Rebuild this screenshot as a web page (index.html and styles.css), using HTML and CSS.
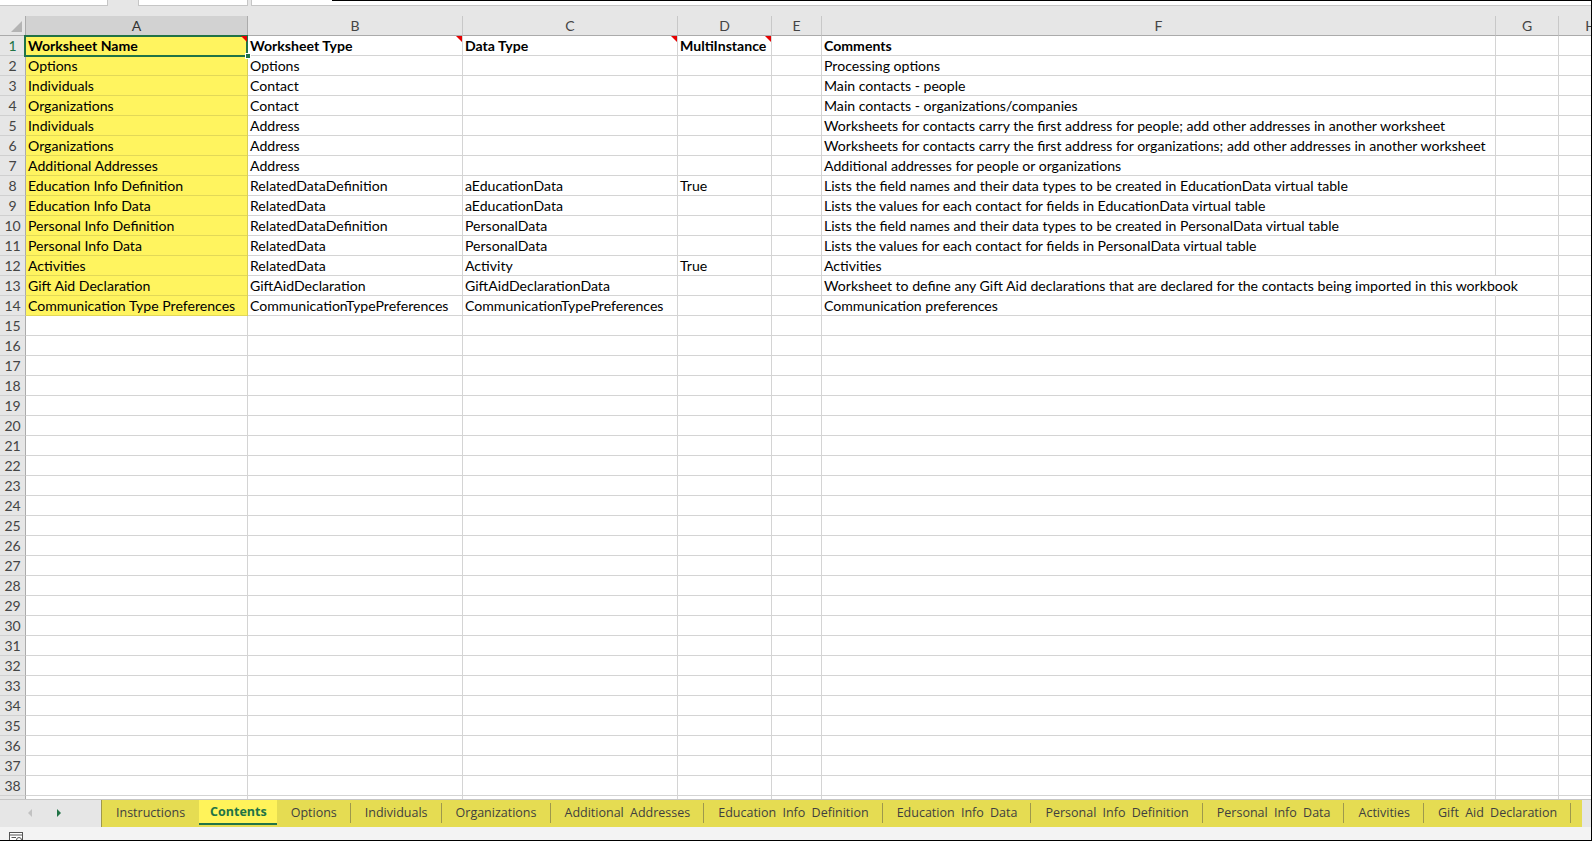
FILE: index.html
```html
<!DOCTYPE html>
<html lang="en">
<head>
<meta charset="utf-8">
<title>Contents</title>
<link rel="stylesheet" href="styles.css">
</head>
<body>
<div class="app">
  <div class="topstrip">
    <div class="fb fb1"></div>
    <div class="fb fb2"></div>
    <div class="fb fb3"></div>
  </div>

  <div class="sheet">
    <div class="row colhead">
      <div class="corner"><span class="tri"></span></div>
      <div class="ch sel">A</div><div class="ch">B</div><div class="ch">C</div><div class="ch">D</div><div class="ch">E</div><div class="ch">F</div><div class="ch">G</div><div class="ch">H</div>
    </div>

    <div class="row">
      <div class="rh selrow">1</div>
      <div class="c y b note active">Worksheet Name<span class="selbox"></span><span class="handle"></span></div>
      <div class="c b note">Worksheet Type</div>
      <div class="c b note">Data Type</div>
      <div class="c b note">MultiInstance</div>
      <div class="c"></div>
      <div class="c b">Comments</div>
      <div class="c"></div><div class="c"></div>
    </div>
    <div class="row">
      <div class="rh">2</div>
      <div class="c y">Options</div><div class="c">Options</div><div class="c"></div><div class="c"></div><div class="c"></div>
      <div class="c">Processing options</div><div class="c"></div><div class="c"></div>
    </div>
    <div class="row">
      <div class="rh">3</div>
      <div class="c y">Individuals</div><div class="c">Contact</div><div class="c"></div><div class="c"></div><div class="c"></div>
      <div class="c">Main contacts - people</div><div class="c"></div><div class="c"></div>
    </div>
    <div class="row">
      <div class="rh">4</div>
      <div class="c y">Organizations</div><div class="c">Contact</div><div class="c"></div><div class="c"></div><div class="c"></div>
      <div class="c">Main contacts - organizations/companies</div><div class="c"></div><div class="c"></div>
    </div>
    <div class="row">
      <div class="rh">5</div>
      <div class="c y">Individuals</div><div class="c">Address</div><div class="c"></div><div class="c"></div><div class="c"></div>
      <div class="c">Worksheets for contacts carry the first address for people; add other addresses in another worksheet</div><div class="c"></div><div class="c"></div>
    </div>
    <div class="row">
      <div class="rh">6</div>
      <div class="c y">Organizations</div><div class="c">Address</div><div class="c"></div><div class="c"></div><div class="c"></div>
      <div class="c">Worksheets for contacts carry the first address for organizations; add other addresses in another worksheet</div><div class="c"></div><div class="c"></div>
    </div>
    <div class="row">
      <div class="rh">7</div>
      <div class="c y">Additional Addresses</div><div class="c">Address</div><div class="c"></div><div class="c"></div><div class="c"></div>
      <div class="c">Additional addresses for people or organizations</div><div class="c"></div><div class="c"></div>
    </div>
    <div class="row">
      <div class="rh">8</div>
      <div class="c y">Education Info Definition</div><div class="c">RelatedDataDefinition</div><div class="c">aEducationData</div><div class="c">True</div><div class="c"></div>
      <div class="c">Lists the field names and their data types to be created in EducationData virtual table</div><div class="c"></div><div class="c"></div>
    </div>
    <div class="row">
      <div class="rh">9</div>
      <div class="c y">Education Info Data</div><div class="c">RelatedData</div><div class="c">aEducationData</div><div class="c"></div><div class="c"></div>
      <div class="c">Lists the values for each contact for fields in EducationData virtual table</div><div class="c"></div><div class="c"></div>
    </div>
    <div class="row">
      <div class="rh">10</div>
      <div class="c y">Personal Info Definition</div><div class="c">RelatedDataDefinition</div><div class="c">PersonalData</div><div class="c"></div><div class="c"></div>
      <div class="c">Lists the field names and their data types to be created in PersonalData virtual table</div><div class="c"></div><div class="c"></div>
    </div>
    <div class="row">
      <div class="rh">11</div>
      <div class="c y">Personal Info Data</div><div class="c">RelatedData</div><div class="c">PersonalData</div><div class="c"></div><div class="c"></div>
      <div class="c">Lists the values for each contact for fields in PersonalData virtual table</div><div class="c"></div><div class="c"></div>
    </div>
    <div class="row">
      <div class="rh">12</div>
      <div class="c y">Activities</div><div class="c">RelatedData</div><div class="c">Activity</div><div class="c">True</div><div class="c"></div>
      <div class="c">Activities</div><div class="c"></div><div class="c"></div>
    </div>
    <div class="row">
      <div class="rh">13</div>
      <div class="c y">Gift Aid Declaration</div><div class="c">GiftAidDeclaration</div><div class="c">GiftAidDeclarationData</div><div class="c"></div><div class="c"></div>
      <div class="c spill">Worksheet to define any Gift Aid declarations that are declared for the contacts being imported in this workbook</div><div class="c"></div><div class="c"></div>
    </div>
    <div class="row">
      <div class="rh">14</div>
      <div class="c y last">Communication Type Preferences</div><div class="c">CommunicationTypePreferences</div><div class="c">CommunicationTypePreferences</div><div class="c"></div><div class="c"></div>
      <div class="c">Communication preferences</div><div class="c"></div><div class="c"></div>
    </div>

    <div class="row"><div class="rh">15</div><div class="c"></div><div class="c"></div><div class="c"></div><div class="c"></div><div class="c"></div><div class="c"></div><div class="c"></div><div class="c"></div></div>
    <div class="row"><div class="rh">16</div><div class="c"></div><div class="c"></div><div class="c"></div><div class="c"></div><div class="c"></div><div class="c"></div><div class="c"></div><div class="c"></div></div>
    <div class="row"><div class="rh">17</div><div class="c"></div><div class="c"></div><div class="c"></div><div class="c"></div><div class="c"></div><div class="c"></div><div class="c"></div><div class="c"></div></div>
    <div class="row"><div class="rh">18</div><div class="c"></div><div class="c"></div><div class="c"></div><div class="c"></div><div class="c"></div><div class="c"></div><div class="c"></div><div class="c"></div></div>
    <div class="row"><div class="rh">19</div><div class="c"></div><div class="c"></div><div class="c"></div><div class="c"></div><div class="c"></div><div class="c"></div><div class="c"></div><div class="c"></div></div>
    <div class="row"><div class="rh">20</div><div class="c"></div><div class="c"></div><div class="c"></div><div class="c"></div><div class="c"></div><div class="c"></div><div class="c"></div><div class="c"></div></div>
    <div class="row"><div class="rh">21</div><div class="c"></div><div class="c"></div><div class="c"></div><div class="c"></div><div class="c"></div><div class="c"></div><div class="c"></div><div class="c"></div></div>
    <div class="row"><div class="rh">22</div><div class="c"></div><div class="c"></div><div class="c"></div><div class="c"></div><div class="c"></div><div class="c"></div><div class="c"></div><div class="c"></div></div>
    <div class="row"><div class="rh">23</div><div class="c"></div><div class="c"></div><div class="c"></div><div class="c"></div><div class="c"></div><div class="c"></div><div class="c"></div><div class="c"></div></div>
    <div class="row"><div class="rh">24</div><div class="c"></div><div class="c"></div><div class="c"></div><div class="c"></div><div class="c"></div><div class="c"></div><div class="c"></div><div class="c"></div></div>
    <div class="row"><div class="rh">25</div><div class="c"></div><div class="c"></div><div class="c"></div><div class="c"></div><div class="c"></div><div class="c"></div><div class="c"></div><div class="c"></div></div>
    <div class="row"><div class="rh">26</div><div class="c"></div><div class="c"></div><div class="c"></div><div class="c"></div><div class="c"></div><div class="c"></div><div class="c"></div><div class="c"></div></div>
    <div class="row"><div class="rh">27</div><div class="c"></div><div class="c"></div><div class="c"></div><div class="c"></div><div class="c"></div><div class="c"></div><div class="c"></div><div class="c"></div></div>
    <div class="row"><div class="rh">28</div><div class="c"></div><div class="c"></div><div class="c"></div><div class="c"></div><div class="c"></div><div class="c"></div><div class="c"></div><div class="c"></div></div>
    <div class="row"><div class="rh">29</div><div class="c"></div><div class="c"></div><div class="c"></div><div class="c"></div><div class="c"></div><div class="c"></div><div class="c"></div><div class="c"></div></div>
    <div class="row"><div class="rh">30</div><div class="c"></div><div class="c"></div><div class="c"></div><div class="c"></div><div class="c"></div><div class="c"></div><div class="c"></div><div class="c"></div></div>
    <div class="row"><div class="rh">31</div><div class="c"></div><div class="c"></div><div class="c"></div><div class="c"></div><div class="c"></div><div class="c"></div><div class="c"></div><div class="c"></div></div>
    <div class="row"><div class="rh">32</div><div class="c"></div><div class="c"></div><div class="c"></div><div class="c"></div><div class="c"></div><div class="c"></div><div class="c"></div><div class="c"></div></div>
    <div class="row"><div class="rh">33</div><div class="c"></div><div class="c"></div><div class="c"></div><div class="c"></div><div class="c"></div><div class="c"></div><div class="c"></div><div class="c"></div></div>
    <div class="row"><div class="rh">34</div><div class="c"></div><div class="c"></div><div class="c"></div><div class="c"></div><div class="c"></div><div class="c"></div><div class="c"></div><div class="c"></div></div>
    <div class="row"><div class="rh">35</div><div class="c"></div><div class="c"></div><div class="c"></div><div class="c"></div><div class="c"></div><div class="c"></div><div class="c"></div><div class="c"></div></div>
    <div class="row"><div class="rh">36</div><div class="c"></div><div class="c"></div><div class="c"></div><div class="c"></div><div class="c"></div><div class="c"></div><div class="c"></div><div class="c"></div></div>
    <div class="row"><div class="rh">37</div><div class="c"></div><div class="c"></div><div class="c"></div><div class="c"></div><div class="c"></div><div class="c"></div><div class="c"></div><div class="c"></div></div>
    <div class="row"><div class="rh">38</div><div class="c"></div><div class="c"></div><div class="c"></div><div class="c"></div><div class="c"></div><div class="c"></div><div class="c"></div><div class="c"></div></div>
    <div class="row partial"><div class="rh"></div><div class="c"></div><div class="c"></div><div class="c"></div><div class="c"></div><div class="c"></div><div class="c"></div><div class="c"></div><div class="c"></div></div>
  </div>

  <div class="tabbar">
    <div class="nav">
      <span class="arrow left"></span>
      <span class="arrow right"></span>
    </div>
    <div class="tabs">
      <div class="tab">Instructions</div>
      <div class="tab active">Contents</div>
      <div class="tab">Options</div>
      <div class="tab">Individuals</div>
      <div class="tab">Organizations</div>
      <div class="tab">Additional Addresses</div>
      <div class="tab">Education Info Definition</div>
      <div class="tab">Education Info Data</div>
      <div class="tab">Personal Info Definition</div>
      <div class="tab">Personal Info Data</div>
      <div class="tab">Activities</div>
      <div class="tab">Gift Aid Declaration</div>
      <div class="tab">Communication Type Preferences</div>
    </div>
    <div class="tabrest"></div>
  </div>

  <div class="status">
    <svg class="macro" width="14" height="10" viewBox="0 0 14 10">
      <rect x="0.5" y="0.5" width="13" height="10" fill="#fff" stroke="#555"/>
      <line x1="0.5" y1="3" x2="13.5" y2="3" stroke="#555"/>
      <line x1="2.5" y1="5.5" x2="7" y2="5.5" stroke="#555"/>
      <circle cx="10" cy="8" r="2.5" fill="#fff" stroke="#555"/>
    </svg>
  </div>
</div>
</body>
</html>
```

FILE: styles.css
```css
* { box-sizing: border-box; }

html, body {
  margin: 0;
  padding: 0;
  background: #ffffff;
}

body {
  width: 1592px;
  height: 841px;
  overflow: hidden;
  font-family: "Lato", "Liberation Sans", sans-serif;
  color: #000;
}

.app {
  width: 1592px;
  height: 841px;
  display: flex;
  flex-direction: column;
  border-right: 1px solid #000;
  border-bottom: 1px solid #000;
  overflow: hidden;
}

/* remnants of the formula bar */
.topstrip {
  height: 16px;
  flex: none;
  display: flex;
  align-items: flex-start;
  background: #e6e6e6;
}

.fb {
  height: 6px;
  background: #fff;
  border-bottom: 1px solid #c6c6c6;
  border-right: 1px solid #c6c6c6;
}

.fb1 { width: 108px; margin-right: 30px; }
.fb2 { width: 110px; margin-right: 3px; border-left: 1px solid #c6c6c6; }
.fb3 {
  flex: 1;
  border-left: 1px solid #c6c6c6;
  border-right: none;
  background: linear-gradient(to right, transparent 80px, #000 80px) top left / 100% 1px no-repeat, #fff;
}

/* grid */
.sheet {
  flex: 1 1 auto;
  overflow: hidden;
  min-height: 0;
}

.row {
  display: grid;
  grid-template-columns: 26px 222px 215px 215px 94px 50px 674px 63px 64px;
  height: 20px;
}

.colhead {
  background: #e6e6e6;
  height: 20px;
}

.corner {
  position: relative;
  border-right: 1px solid #ababab;
  border-bottom: 1px solid #ababab;
}

.corner .tri {
  position: absolute;
  right: 3px;
  bottom: 3px;
  width: 0;
  height: 0;
  border-left: 11px solid transparent;
  border-bottom: 11px solid #b4b4b4;
}

.ch {
  font-size: 14px;
  line-height: 19px;
  text-align: center;
  color: #444;
  border-right: 1px solid #c8c8c8;
  border-bottom: 1px solid #ababab;
}

.ch.sel {
  background: #d2d2d2;
  color: #333;
  border-right-color: #ababab;
}

.rh {
  background: #e6e6e6;
  font-size: 14px;
  line-height: 19px;
  text-align: center;
  color: #444;
  border-right: 1px solid #ababab;
  border-bottom: 1px solid #d0d0d0;
}

.rh.selrow {
  color: #217346;
}

.c {
  position: relative;
  font-size: 14.1px;
  line-height: 19px;
  padding: 0 2px;
  white-space: nowrap;
  overflow: hidden;
  border-right: 1px solid #d4d4d4;
  border-bottom: 1px solid #d4d4d4;
}

.c.b { font-weight: 700; }

.c.y {
  background: #fff45f;
  border-right-color: #d9cf55;
  border-bottom-color: #e2d858;
}

.c.spill {
  overflow: visible;
  border-right-color: transparent;
  z-index: 1;
}

.c.note::after {
  content: "";
  position: absolute;
  top: 0;
  right: 0;
  width: 0;
  height: 0;
  border-left: 6px solid transparent;
  border-top: 6px solid #e60000;
}

.c.active { overflow: visible; z-index: 2; }

.selbox {
  position: absolute;
  left: -2px;
  top: -1px;
  right: -1px;
  bottom: -2px;
  border: 2px solid #217346;
  pointer-events: none;
}

.handle {
  position: absolute;
  right: -4px;
  bottom: -4px;
  width: 6px;
  height: 6px;
  background: #217346;
  border: 1px solid #fff;
}

/* sheet tabs */
.tabbar {
  height: 28px;
  flex: none;
  display: flex;
  background: #e6e6e6;
  border-top: 1px solid #c6c6c6;
}

.nav {
  width: 101px;
  flex: none;
  position: relative;
}

.arrow {
  position: absolute;
  top: 9px;
  width: 0;
  height: 0;
  border-top: 4px solid transparent;
  border-bottom: 4px solid transparent;
}

.arrow.left {
  left: 28px;
  border-right: 4px solid #c2c2c2;
}

.arrow.right {
  left: 57px;
  border-left: 4px solid #217346;
}

.tabs {
  width: 1481px;
  flex: none;
  display: flex;
  overflow: hidden;
  background: #e5dc52;
  border-left: 1px solid #9e984c;
}

.tab {
  position: relative;
  flex: none;
  padding: 0 14px;
  font-family: "Open Sans", "Noto Sans", sans-serif;
  font-size: 12.5px;
  word-spacing: 3px;
  line-height: 26px;
  color: #3f3f3f;
  background: #e5dc52;
  white-space: nowrap;
}

.tab::after {
  content: "";
  position: absolute;
  right: 0;
  top: 3px;
  bottom: 4px;
  width: 1px;
  background: #9e984c;
}

.tab.active::after,
.tab:has(+ .active)::after {
  display: none;
}

.tab.active {
  background: #fff35a;
  color: #217346;
  font-weight: 700;
  padding: 0 10px 0 11px;
  border-bottom: 2px solid #217346;
  line-height: 24px;
  height: 25px;
}

.tabrest {
  flex: 1;
}

/* status bar */
.status {
  flex: none;
  height: 13px;
  background: #f3f3f3;
  position: relative;
  overflow: hidden;
}

.macro {
  position: absolute;
  left: 9px;
  top: 5px;
}
```
